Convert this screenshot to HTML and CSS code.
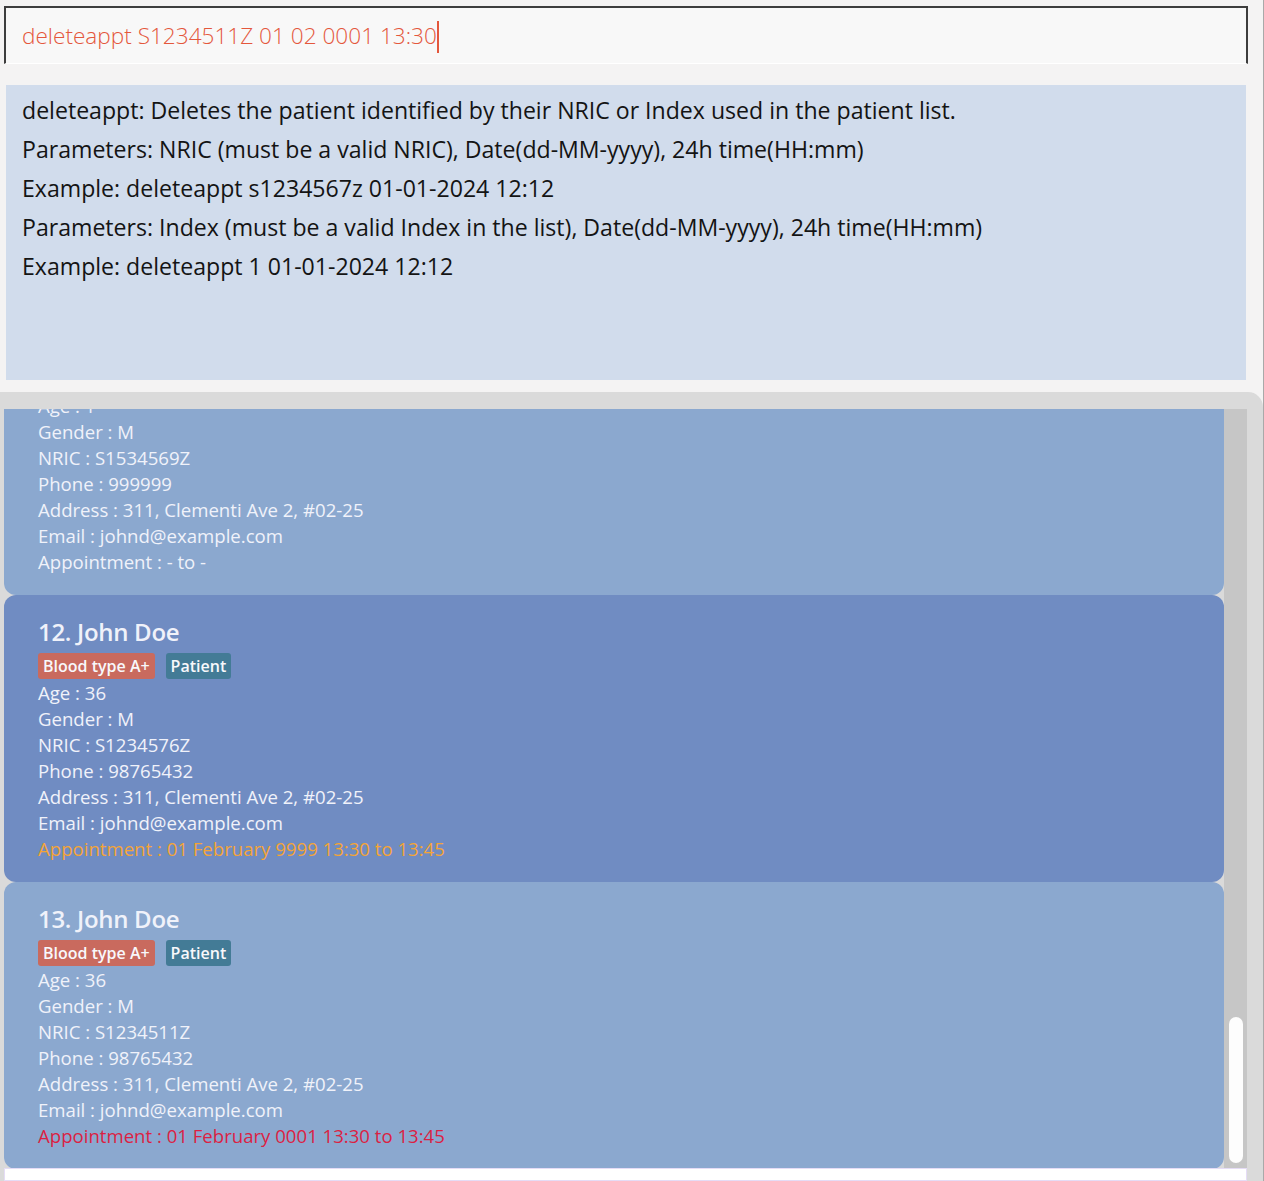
FILE: index.html
```html
<!DOCTYPE html>
<html>
<head>
<meta charset="utf-8">
<link rel="stylesheet" href="styles.css">
</head>
<body>
<div class="app">
  <div class="command">
    <span class="command-text">deleteappt S1234511Z 01 02 0001 13:30</span><span class="caret"></span>
  </div>

  <div class="result">
    <div>deleteappt: Deletes the patient identified by their NRIC or Index used in the patient list.</div>
    <div>Parameters: NRIC (must be a valid NRIC), Date(dd-MM-yyyy), 24h time(HH:mm)</div>
    <div>Example: deleteappt s1234567z 01-01-2024 12:12</div>
    <div>Parameters: Index (must be a valid Index in the list), Date(dd-MM-yyyy), 24h time(HH:mm)</div>
    <div>Example: deleteappt 1 01-01-2024 12:12</div>
  </div>

  <div class="list-panel">
    <div class="list-view">
      <div class="cells">
        <div class="card card-partial">
          <div class="field field-first">Age : 1</div>
          <div class="field">Gender : M</div>
          <div class="field">NRIC : S1534569Z</div>
          <div class="field">Phone : 999999</div>
          <div class="field">Address : 311, Clementi Ave 2, #02-25</div>
          <div class="field">Email : johnd@example.com</div>
          <div class="field">Appointment : - to -</div>
        </div>
        <div class="card card-selected">
          <div class="name">12. John Doe</div>
          <div class="tags"><span class="tag tag-blood">Blood type A+</span><span class="tag tag-role">Patient</span></div>
          <div class="field">Age : 36</div>
          <div class="field">Gender : M</div>
          <div class="field">NRIC : S1234576Z</div>
          <div class="field">Phone : 98765432</div>
          <div class="field">Address : 311, Clementi Ave 2, #02-25</div>
          <div class="field">Email : johnd@example.com</div>
          <div class="field appt-upcoming">Appointment : 01 February 9999 13:30 to 13:45</div>
        </div>
        <div class="card">
          <div class="name">13. John Doe</div>
          <div class="tags"><span class="tag tag-blood">Blood type A+</span><span class="tag tag-role">Patient</span></div>
          <div class="field">Age : 36</div>
          <div class="field">Gender : M</div>
          <div class="field">NRIC : S1234511Z</div>
          <div class="field">Phone : 98765432</div>
          <div class="field">Address : 311, Clementi Ave 2, #02-25</div>
          <div class="field">Email : johnd@example.com</div>
          <div class="field appt-past">Appointment : 01 February 0001 13:30 to 13:45</div>
        </div>
      </div>
      <div class="track"><div class="thumb"></div></div>
    </div>
    <div class="status"></div>
  </div>
</div>
</body>
</html>
```
FILE: styles.css
```css
* { box-sizing: border-box; }

html, body {
  margin: 0;
  padding: 0;
  background: #f4f3f3;
  font-family: "Open Sans", "Noto Sans", sans-serif;
}

.app {
  width: 1264px;
  height: 1181px;
  overflow: hidden;
  border-right: 1px solid #a9a9a9;
  display: flex;
  flex-direction: column;
}

.command {
  margin: 6px 15px 0 4px;
  height: 58px;
  background: #f8f8f8;
  border: 2px solid #3d3d3d;
  border-bottom: 1px solid #ffffff;
  padding: 13px 16px 0 16px;
  display: flex;
  align-items: flex-start;
}

.command-text {
  font-size: 22.6px;
  font-weight: 300;
  line-height: 30px;
  color: #e4573c;
  white-space: nowrap;
}

.caret {
  display: inline-block;
  width: 2px;
  height: 32px;
  background: #e4573c;
}

.result {
  margin: 21px 17px 0 6px;
  height: 295px;
  background: #d1dcec;
  padding: 6px 16px 0 16px;
  font-size: 23.1px;
  line-height: 39px;
  color: #141414;
  white-space: nowrap;
}

.list-panel {
  margin-top: 12px;
  flex: 1;
  background: #dadada;
  border-top-right-radius: 15px;
  padding: 17px 16px 0 4px;
  display: flex;
  flex-direction: column;
}

.list-view {
  display: flex;
  height: 759px;
  flex: none;
}

.cells {
  width: 1220px;
  overflow: hidden;
}

.card {
  height: 287px;
  background: #8ba8cf;
  border-radius: 12px;
  padding: 22px 20px 0 34px;
  color: #f0f2fa;
  overflow: hidden;
}

.card-partial {
  height: 186px;
  border-radius: 0 0 12px 12px;
  padding-top: 0;
}

.field-first {
  margin-top: -16px;
}

.card-selected {
  background: #708cc2;
}

.name {
  font-size: 24px;
  font-weight: 600;
  letter-spacing: -0.3px;
  line-height: 30px;
  white-space: nowrap;
}

.tags {
  display: flex;
  gap: 11px;
  margin-top: 6px;
  margin-bottom: 1px;
}

.tag {
  height: 26px;
  line-height: 26px;
  padding: 0 5px;
  border-radius: 3px;
  font-size: 16px;
  font-weight: 600;
  color: #f8f8fb;
  white-space: nowrap;
}

.tag-blood { background: #c96a5e; }
.tag-role { background: #437b96; }

.field {
  font-size: 18.6px;
  line-height: 26px;
  white-space: nowrap;
}

.appt-upcoming { color: #f4a437; }
.appt-past { color: #dc1f43; }

.track {
  width: 23px;
  background: #c6c6c6;
  display: flex;
  flex-direction: column;
  justify-content: flex-end;
  padding: 0 4px 5px 5px;
}

.thumb {
  height: 146px;
  background: #fdfdfd;
  border-radius: 7px;
}

.status {
  flex: 1;
  background: #ffffff;
  border: 1px solid #e5dcf6;
}
```
